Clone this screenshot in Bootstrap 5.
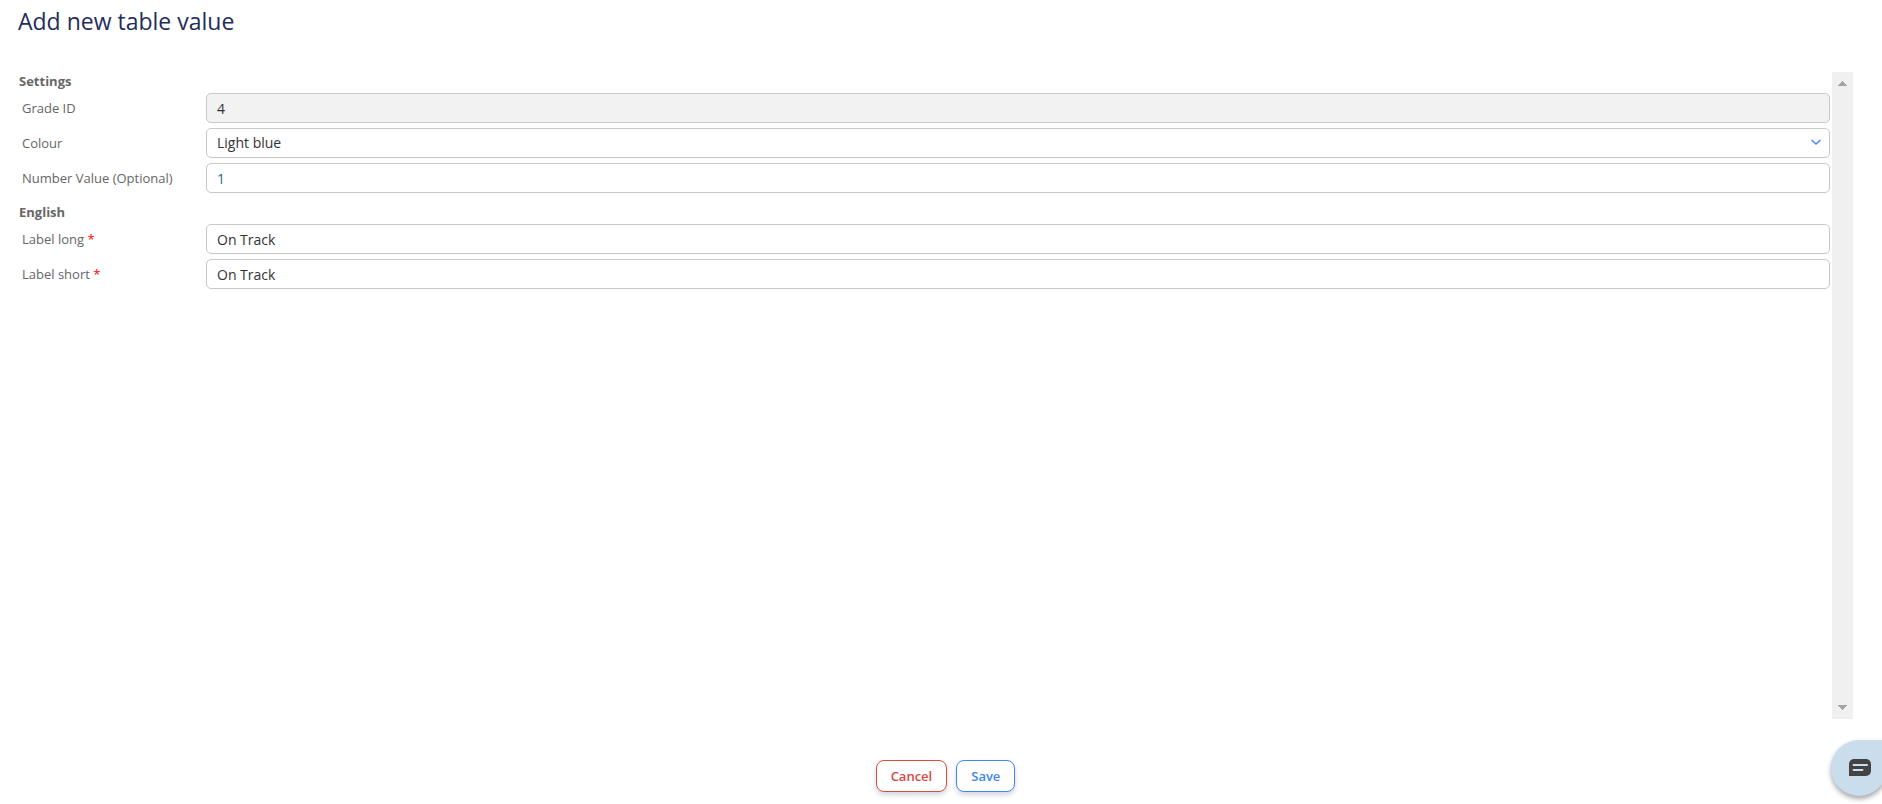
<!DOCTYPE html>
<html lang="en">
<head>
<meta charset="utf-8">
<meta name="viewport" content="width=device-width, initial-scale=1">
<title>Add new table value</title>
<link rel="stylesheet" href="https://cdn.jsdelivr.net/npm/bootstrap@5.3.0/dist/css/bootstrap.min.css">
<style>
  body { font-family: "Open Sans", sans-serif; font-size: 13px; line-height: 20px; color: #666; background: #fff; }
  .page-title { font-size: 23px; line-height: 28px; font-weight: 500; color: #1f2d5c; padding: 7px 18px 0; margin-bottom: 37px; }
  .scroll-pane { margin-right: 29px; }
  .form-body { padding: 0 2px 0 19px; }
  .group-title { font-size: 13px; line-height: 18px; font-weight: 700; margin: 10px 0 3px; color: #666; }
  .group-title.first { margin-top: 0; }
  .field-list { display: grid; gap: 5px; }
  .field-label { width: 187px; padding-left: 3px; flex: none; }
  .required { color: #f00; }
  .field-list .form-control, .field-list .form-select {
    height: 30px; padding: 0 10px; font-size: 14px; line-height: 28px; color: #333;
    border: 1px solid #c8c8c8; border-radius: 5px; }
  .field-list .form-control[readonly] { background: #f2f2f2; }
  .field-list .number-input { color: #2d6b88; }
  .field-list .form-select { background-position: right 7px center; background-size: 12px 12px;
    background-image: url("data:image/svg+xml,%3Csvg xmlns='http://www.w3.org/2000/svg' viewBox='0 0 12 12'%3E%3Cpath d='M1.5 3 6 7l4.500-4' fill='none' stroke='%234d86f7' stroke-width='1.500'/%3E%3C/svg%3E"); }
  .scroll-track { width: 21px; background: #f0f0f0; padding: 9px 0; }
  .action-bar { padding: 41px 0 12px 9px; gap: 9px; }
  .action-bar .btn { height: 32px; padding: 0 14px; font-size: 13px; line-height: 30px; font-weight: 600;
    background: #fff; border-radius: 8px; box-shadow: 0 3px 5px rgba(40, 50, 110, .2); }
  .btn-cancel { color: #d6483f; border-color: #e04a3a; }
  .btn-save { color: #4285f4; border-color: #4285f4; }
  .chat-button { right: -5px; bottom: 8px; width: 56px; height: 56px; padding: 0 0 2px 18px; border: 0;
    background: #c9dded; border-radius: 28px 0 28px 28px; box-shadow: 0 3px 5px rgba(0, 0, 0, .35); }
</style>
</head>
<body class="d-flex flex-column vh-100 overflow-hidden">
<h1 class="page-title">Add new table value</h1>

<main class="scroll-pane d-flex flex-grow-1">
  <form class="form-body flex-grow-1" id="value-form">
    <h2 class="group-title first">Settings</h2>
    <div class="field-list">
      <div class="d-flex align-items-center">
        <label class="field-label" for="grade">Grade ID</label>
        <input class="form-control" id="grade" type="text" value="4" readonly>
      </div>
      <div class="d-flex align-items-center">
        <label class="field-label" for="colour">Colour</label>
        <select class="form-select" id="colour"><option>Light blue</option></select>
      </div>
      <div class="d-flex align-items-center">
        <label class="field-label" for="number">Number Value (Optional)</label>
        <input class="form-control number-input" id="number" type="text" value="1">
      </div>
    </div>
    <h2 class="group-title">English</h2>
    <div class="field-list">
      <div class="d-flex align-items-center">
        <label class="field-label" for="long">Label long <span class="required">*</span></label>
        <input class="form-control" id="long" type="text" value="On Track" required>
      </div>
      <div class="d-flex align-items-center">
        <label class="field-label" for="short">Label short <span class="required">*</span></label>
        <input class="form-control" id="short" type="text" value="On Track" required>
      </div>
    </div>
  </form>
  <div class="scroll-track d-flex flex-column align-items-center justify-content-between" aria-hidden="true">
    <svg width="9" height="5" viewBox="0 0 9 5" shape-rendering="crispEdges"><path d="M0 5 4.500 0 9 5z" fill="#a3a3a3"/></svg>
    <svg width="9" height="5" viewBox="0 0 9 5" shape-rendering="crispEdges"><path d="M0 0h9L4.500 5z" fill="#a3a3a3"/></svg>
  </div>
</main>

<footer class="action-bar d-flex justify-content-center">
  <button class="btn btn-cancel" type="button">Cancel</button>
  <button class="btn btn-save" type="submit" form="value-form">Save</button>
</footer>

<button class="chat-button position-fixed d-flex align-items-center" type="button" aria-label="Open chat">
  <svg width="22" height="17" viewBox="0 0 22 17"><path d="M5 0h12a5 5 0 0 1 5 5v7a5 5 0 0 1-5 5H0V5a5 5 0 0 1 5-5z" fill="#434343"/><path d="M4.500 6h13.500M4.500 11h9" stroke="#c9dded" stroke-width="2" stroke-linecap="round"/></svg>
</button>
<script src="https://cdn.jsdelivr.net/npm/bootstrap@5.3.0/dist/js/bootstrap.bundle.min.js"></script>
</body>
</html>
